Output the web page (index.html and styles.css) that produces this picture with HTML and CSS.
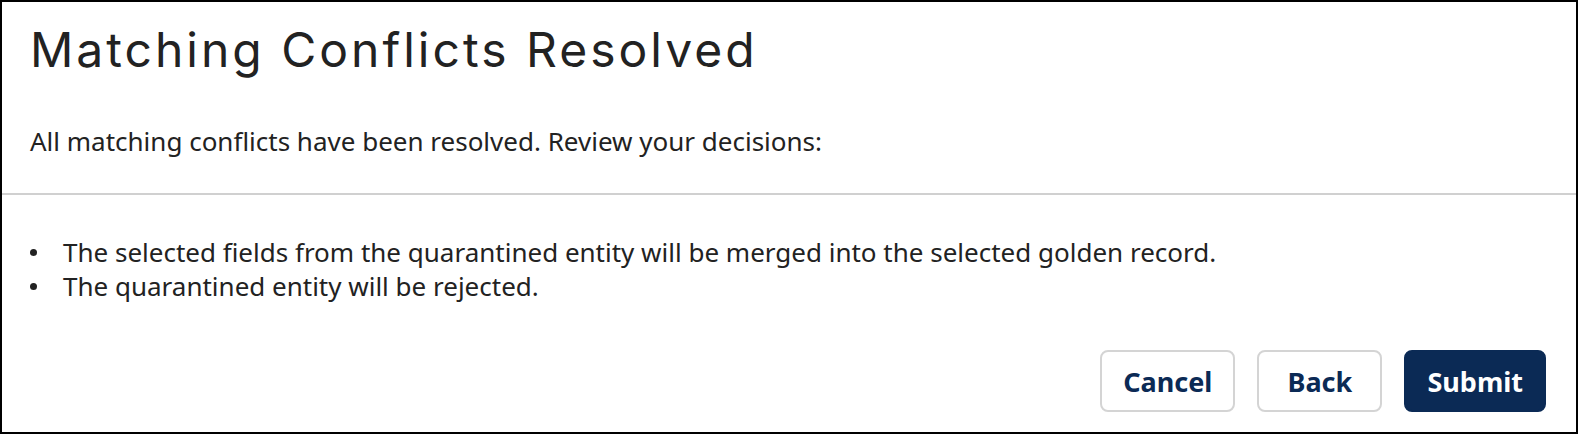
FILE: index.html
```html
<!DOCTYPE html>
<html lang="en">
<head>
<meta charset="utf-8">
<title>Matching Conflicts Resolved</title>
<link rel="stylesheet" href="styles.css">
</head>
<body>
<div class="dialog">
  <div class="head">
    <h1 class="title">Matching Conflicts Resolved</h1>
    <p class="intro">All matching conflicts have been resolved. Review your decisions:</p>
  </div>
  <div class="content">
    <ul class="decisions">
      <li>The selected fields from the quarantined entity will be merged into the selected golden record.</li>
      <li>The quarantined entity will be rejected.</li>
    </ul>
  </div>
  <div class="footer">
    <button class="btn btn-outline">Cancel</button>
    <button class="btn btn-outline">Back</button>
    <button class="btn btn-primary">Submit</button>
  </div>
</div>
</body>
</html>
```

FILE: styles.css
```css
html, body {
  margin: 0;
  padding: 0;
  background: #fff;
}
.dialog {
  box-sizing: border-box;
  width: 1578px;
  height: 434px;
  border: 2px solid #000;
  display: flex;
  flex-direction: column;
  font-family: "Noto Sans", "Open Sans", sans-serif;
  color: #222;
}
.head {
  box-sizing: border-box;
  height: 193px;
  padding: 18px 28px 0;
  border-bottom: 2px solid #d0d0d0;
}
.title {
  margin: 0;
  font-family: Inter, "Noto Sans", sans-serif;
  font-weight: 400;
  font-size: 48px;
  line-height: 60px;
  letter-spacing: 3px;
  color: #222;
}
.intro {
  margin: 44px 0 0;
  font-size: 26px;
  line-height: 34px;
}
.content {
  padding: 40px 28px 0;
}
.decisions {
  margin: 0;
  padding: 0;
  list-style: none;
  font-size: 26px;
  line-height: 34px;
}
.decisions li {
  display: flex;
  align-items: center;
}
.decisions li::before {
  content: "";
  flex: none;
  width: 7px;
  height: 7px;
  border-radius: 50%;
  background: #222;
  margin-left: 0;
  margin-right: 26px;
}
.footer {
  margin-top: auto;
  display: flex;
  justify-content: flex-end;
  gap: 22px;
  padding: 0 30px 20px;
}
.btn {
  font-family: "Noto Sans", sans-serif;
  font-weight: 700;
  font-size: 27px;
  height: 62px;
  min-width: 125px;
  padding: 0 21px;
  border-radius: 8px;
  cursor: pointer;
}
.btn-outline {
  background: #fff;
  color: #0b2a55;
  border: 2px solid #d4d4d4;
}
.btn-primary {
  background: #0b2a55;
  color: #fff;
  border: 2px solid #0b2a55;
}
```
